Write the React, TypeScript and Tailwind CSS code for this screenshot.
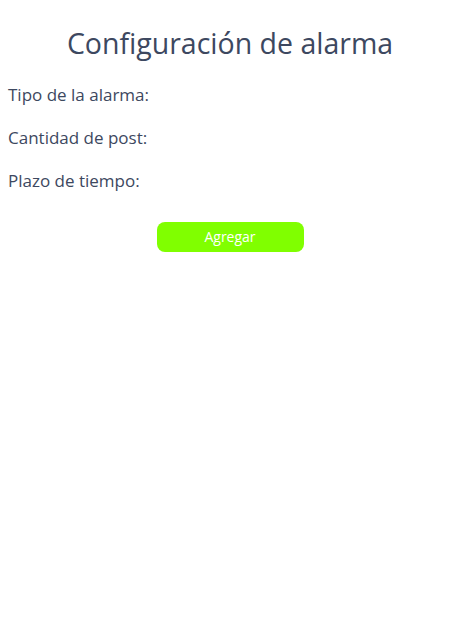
import React from 'react';

const App = () => {
  return (
    <div className="min-h-[638px] bg-white text-[#3d4860] font-['Segoe_UI','Open_Sans',sans-serif]">
      <h1 className="pt-[24px] text-center text-[28.5px] leading-[38px]">Configuración de alarma</h1>
      <div className="mt-[21px] px-2 flex flex-col gap-[19px] text-[17px] leading-[24px]">
        <label>Tipo de la alarma:</label>
        <label>Cantidad de post:</label>
        <label>Plazo de tiempo:</label>
      </div>
      <div className="mt-[29px] flex justify-center">
        <button className="w-[147px] h-[30px] rounded-lg bg-[#80ff00] text-white text-sm">Agregar</button>
      </div>
    </div>
  );
};

export default App;
